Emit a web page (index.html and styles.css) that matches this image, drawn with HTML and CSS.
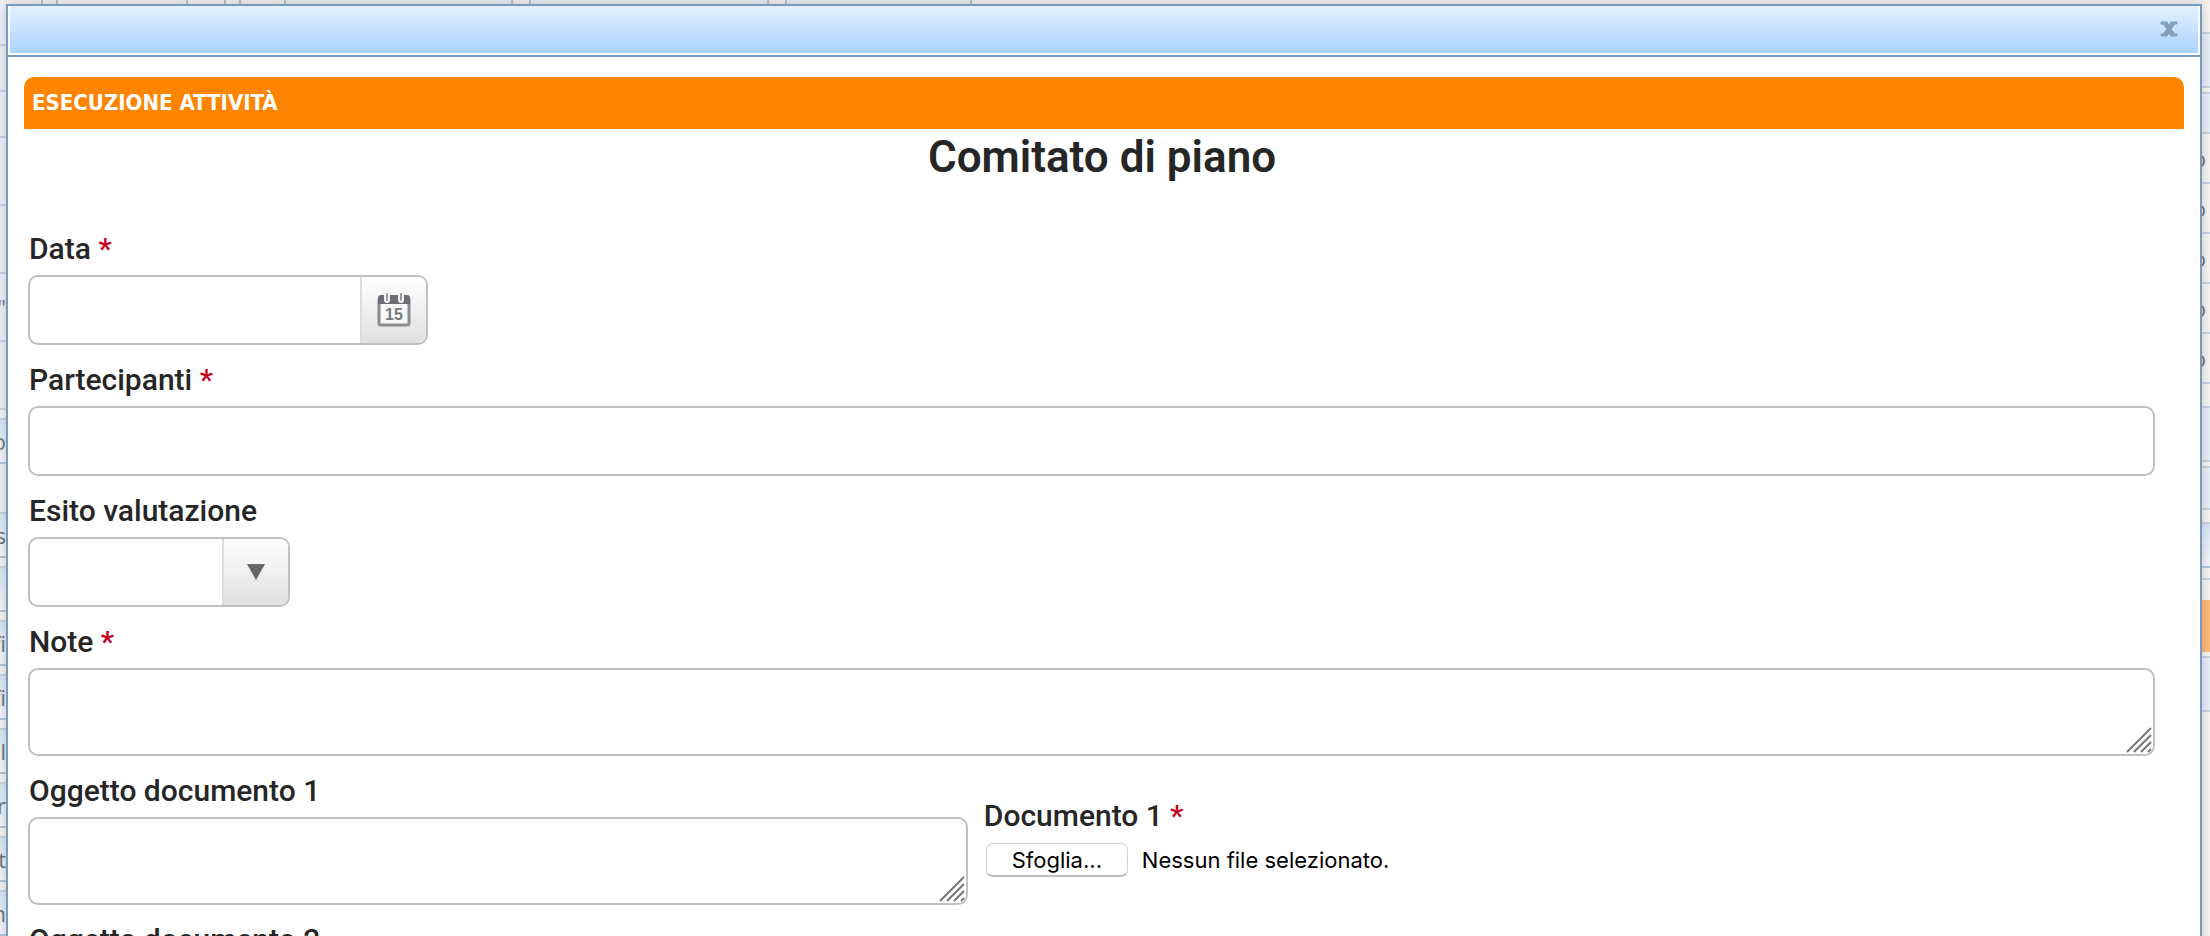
FILE: index.html
```html
<!DOCTYPE html>
<html lang="it">
<head>
    <meta charset="UTF-8">
    <meta name="viewport" content="width=device-width, initial-scale=1.0">
    <title>Esecuzione attività</title>
    <link rel="stylesheet" href="styles.css">
</head>
<body>
    <!-- page under the dialog -->
    <div class="page" aria-hidden="true">
        <div class="toolbar">
            <span class="cell w42"></span><span class="cell w14"></span><span class="cell w130"></span><span class="cell w38"></span><span class="cell w14"></span><span class="cell w44"></span>
            <span class="cell field-cell w227"></span><span class="cell w18"></span><span class="cell field-cell w238"></span><span class="cell w18"></span><span class="cell field-cell w184"></span>
        </div>
        <div class="columns">
            <div class="menu">
                <div class="row h42"></div>
                <div class="row h46"></div>
                <div class="row h46"></div>
                <div class="row h68"></div>
                <div class="row h68"></div>
                <div class="row h68">"</div>
                <div class="row h68"></div>
                <div class="row gap"></div>
                <div class="row tab">o</div>
                <div class="row h50"></div>
                <div class="row tab">s</div>
                <div class="row gap"></div>
                <div class="row tab"></div>
                <div class="row gap"></div>
                <div class="row tab">fi</div>
                <div class="row gap"></div>
                <div class="row tab">fi</div>
                <div class="row gap"></div>
                <div class="row tab">ol</div>
                <div class="row gap"></div>
                <div class="row tab">or</div>
                <div class="row gap"></div>
                <div class="row tab">t</div>
                <div class="row gap"></div>
                <div class="row tab">n</div>
            </div>
            <div class="side">
                <div class="line h30"></div>
                <div class="line panel h54"></div>
                <div class="line h6"></div>
                <div class="line panel h40"></div>
                <div class="line h50">o</div>
                <div class="line h50">o</div>
                <div class="line h50">o</div>
                <div class="line h50">o</div>
                <div class="line h50">o</div>
                <div class="line h24"></div>
                <div class="line panel h54"></div>
                <div class="line h6"></div>
                <div class="line panel h42"></div>
                <div class="line h14"></div>
                <div class="line tab"></div>
                <div class="line h12"></div>
                <div class="blank"></div>
                <div class="alert"></div>
                <div class="line h6"></div>
                <div class="line panel h54"></div>
            </div>
        </div>
    </div>

    <div class="dialog" role="dialog" aria-labelledby="dialog-title">
        <div class="dialog-header">
            <button type="button" class="close" aria-label="Chiudi">
                <svg width="18" height="16" viewBox="0 0 18 16"><path d="M1 1h6l2 3 2-3h6v2h-2l-4 5 4 5h2v2h-6l-2-3-2 3H1v-2h2l4-5-4-5H1z"/></svg>
            </button>
        </div>
        <div class="dialog-body">
            <h2 class="section-title" id="dialog-title">ESECUZIONE ATTIVITÀ</h2>
            <h1>Comitato di piano</h1>

            <form class="form">
                <div class="field">
                    <label for="data">Data <span class="required">*</span></label>
                    <div class="control date">
                        <input type="text" id="data">
                        <button type="button" class="addon" aria-label="Apri calendario">
                            <svg width="34" height="34" viewBox="0 0 34 34">
                                <rect x="2" y="5" width="30" height="27" rx="2" fill="#f8f8f8" stroke="#8b8b90" stroke-width="3"/>
                                <path d="M1 11V5q0-3 3-3h26q3 0 3 3v6z" fill="#6c6c74"/>
                                <path d="M10 1v6M24 1v6" stroke="#f6f6f6" stroke-width="6" stroke-linecap="round"/>
                                <path d="M10 1v6M24 1v6" stroke="#97979b" stroke-width="2" stroke-linecap="round"/>
                                <text x="17" y="27" text-anchor="middle" class="cal-day">15</text>
                            </svg>
                        </button>
                    </div>
                </div>

                <div class="field">
                    <label for="partecipanti">Partecipanti <span class="required">*</span></label>
                    <div class="control">
                        <input type="text" id="partecipanti">
                    </div>
                </div>

                <div class="field">
                    <label for="esito">Esito valutazione</label>
                    <div class="control combo">
                        <select id="esito">
                            <option value=""></option>
                        </select>
                        <span class="addon">
                            <svg width="18" height="16" viewBox="0 0 18 16"><path d="M0 0h18L9 16z" fill="#666"/></svg>
                        </span>
                    </div>
                </div>

                <div class="field">
                    <label for="note">Note <span class="required">*</span></label>
                    <div class="control area">
                        <textarea id="note"></textarea>
                        <svg class="grip" width="26" height="26" viewBox="0 0 26 26"><path d="M1 25L25 1M8 25L25 8M15 25l10-10M22 25l3-3"/></svg>
                    </div>
                </div>

                <div class="doc-row">
                    <div class="field">
                        <label for="oggetto1">Oggetto documento 1</label>
                        <div class="control area">
                            <textarea id="oggetto1"></textarea>
                            <svg class="grip" width="26" height="26" viewBox="0 0 26 26"><path d="M1 25L25 1M8 25L25 8M15 25l10-10M22 25l3-3"/></svg>
                        </div>
                    </div>
                    <div class="upload">
                        <label for="documento1">Documento 1 <span class="required">*</span></label>
                        <div class="file">
                            <input type="file" id="documento1" hidden>
                            <button type="button" class="browse" id="sfoglia">Sfoglia...</button>
                            <span id="file-name">Nessun file selezionato.</span>
                        </div>
                    </div>
                </div>

                <div class="doc-row">
                    <div class="field">
                        <label for="oggetto2">Oggetto documento 2</label>
                        <div class="control area">
                            <textarea id="oggetto2"></textarea>
                        </div>
                    </div>
                </div>
            </form>
        </div>
    </div>

    <script>
const fileInput = document.getElementById("documento1");
const fileName = document.getElementById("file-name");

document.getElementById("sfoglia").addEventListener("click", () => fileInput.click());
fileInput.addEventListener("change", () => {
    fileName.textContent = fileInput.files.length ? fileInput.files[0].name : "Nessun file selezionato.";
});
    </script>
</body>
</html>
```

FILE: styles.css
```css
* {
    margin: 0;
    padding: 0;
    box-sizing: border-box;
}

body {
    position: relative;
    height: 100vh;
    overflow: hidden;
    background-color: #f7f6f4;
    font-family: Roboto, sans-serif;
    color: #262626;
}

/* page under the dialog */
.page {
    height: 100vh;
    overflow: hidden;
    color: #777;
    font-family: "Open Sans", sans-serif;
    font-size: 22px;
}

.toolbar {
    display: flex;
    height: 4px;
    background-color: #f4f1ef;
}

.cell {
    border-right: 2px solid #b4c4d3;
}

.field-cell {
    background-color: #eaeef1;
}

.w14 { width: 15px; }
.w18 { width: 18px; }
.w38 { width: 38px; }
.w42 { width: 43px; }
.w44 { width: 45px; }
.w130 { width: 130px; }
.w184 { width: 185px; }
.w227 { width: 227px; }
.w238 { width: 238px; }

.columns {
    display: flex;
    justify-content: space-between;
}

.menu,
.side {
    width: 8px;
}

.row,
.line {
    display: flex;
    align-items: center;
    justify-content: flex-end;
    overflow: hidden;
    border-bottom: 2px solid #c9d6e4;
}

.row {
    padding-right: 2px;
    background-color: #eef2fa;
}

.line {
    padding-right: 4px;
}

.row.gap {
    height: 10px;
    background-color: #f5f5f5;
}

.tab {
    height: 44px;
    border-color: #b0c7dd;
}

.row.tab,
.line.tab {
    background: linear-gradient(#d9e8f7, #f4f8fc);
}

.panel {
    background-color: #e9f0fa;
}

.alert {
    height: 52px;
    background-color: #ffbc7a;
}

.blank { height: 20px; }
.h6 { height: 6px; }
.h12 { height: 12px; }
.h14 { height: 14px; }
.h24 { height: 24px; }
.h30 { height: 30px; }
.h40 { height: 40px; }
.h42 { height: 42px; }
.h46 { height: 46px; }
.h50 { height: 50px; }
.h54 { height: 54px; }
.h68 { height: 68px; }

/* dialog */
.dialog {
    position: absolute;
    top: 4px;
    left: 6px;
    right: 8px;
    bottom: -200px;
    background-color: white;
    border: 2px solid #759cbf;
    box-shadow: 0 0 12px rgba(0, 0, 0, 0.2);
}

.dialog-header {
    display: flex;
    justify-content: flex-end;
    align-items: center;
    height: 49px;
    padding: 0 20px 2px 0;
    border: solid white;
    border-width: 0 2px 2px;
    background: linear-gradient(#e4f1ff, #a9d3ff) padding-box;
    box-shadow: 0 2px 0 #759cbf;
}

.close {
    display: flex;
    border: none;
    background: none;
    cursor: pointer;
}

.close svg {
    fill: #84a0b9;
    stroke: #84a0b9;
}

.dialog-body {
    padding: 22px 16px;
}

.section-title {
    height: 52px;
    padding: 0 8px;
    background-color: #ff8400;
    border-radius: 10px 10px 0 0;
    color: white;
    font-family: "DejaVu Sans Condensed", "DejaVu Sans", sans-serif;
    font-size: 22px;
    line-height: 52px;
}

h1 {
    height: 85px;
    padding-right: 4px;
    font-size: 44px;
    font-weight: 600;
    line-height: 56px;
    text-align: center;
}

.form {
    padding: 0 29px 0 4px;
}

label {
    display: block;
    padding-left: 1px;
    font-size: 30px;
    font-weight: 500;
    line-height: 40px;
}

.required {
    color: #c8001e;
}

.field > label {
    padding-top: 15px;
    margin-bottom: 6px;
}

.control {
    position: relative;
    display: flex;
    height: 70px;
    overflow: hidden;
    border: 2px solid #c0c0c0;
    border-radius: 10px;
    background-color: white;
}

.date {
    width: 400px;
}

.combo {
    width: 262px;
}

.area {
    height: 88px;
}

.control input,
.control select,
.control textarea {
    flex: 1;
    min-width: 0;
    padding: 0 12px;
    border: none;
    outline: none;
    resize: none;
    background: none;
    appearance: none;
    font: inherit;
    font-size: 26px;
}

.addon {
    display: flex;
    justify-content: center;
    align-items: center;
    width: 66px;
    border: none;
    border-left: 2px solid #dcdcdc;
    background: linear-gradient(#fff, #e0e0e0);
    pointer-events: none;
}

button.addon {
    pointer-events: auto;
    cursor: pointer;
}

.cal-day {
    fill: #77777c;
    font-family: "Liberation Sans", Arial, sans-serif;
    font-size: 16px;
    font-weight: bold;
}

.grip {
    position: absolute;
    right: 1px;
    bottom: 1px;
    fill: none;
    stroke: #777;
    stroke-width: 2;
    pointer-events: none;
}

.doc-row {
    display: grid;
    grid-template-columns: 89fr 111fr;
    gap: 15px;
}

.upload {
    padding-top: 40px;
}

.file {
    display: flex;
    align-items: center;
    gap: 14px;
    margin-top: 7px;
    padding-left: 3px;
    color: black;
    font-family: Inter, sans-serif;
    font-size: 22px;
}

.browse {
    width: 142px;
    height: 34px;
    border: 1px solid #d2d2d2;
    border-bottom: 2px solid #bdbdbd;
    border-radius: 7px;
    background-color: white;
    color: black;
    font: inherit;
    cursor: pointer;
}
```
